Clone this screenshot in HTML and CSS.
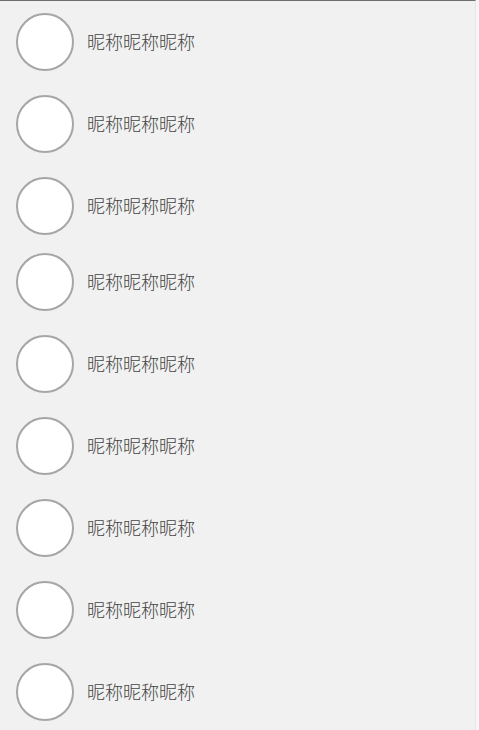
FILE: index.html
```html
<!DOCTYPE html>
<html lang="zh-CN">
<head>
<meta charset="utf-8">
<title>昵称列表</title>
<link rel="stylesheet" href="styles.css">
</head>
<body>
<div class="frame">
  <ul class="list">
    <li class="row"><span class="avatar"></span><span class="name">昵称昵称昵称</span></li>
    <li class="row"><span class="avatar"></span><span class="name">昵称昵称昵称</span></li>
    <li class="row"><span class="avatar"></span><span class="name">昵称昵称昵称</span></li>
    <li class="row row--tight"><span class="avatar"></span><span class="name">昵称昵称昵称</span></li>
    <li class="row"><span class="avatar"></span><span class="name">昵称昵称昵称</span></li>
    <li class="row"><span class="avatar"></span><span class="name">昵称昵称昵称</span></li>
    <li class="row"><span class="avatar"></span><span class="name">昵称昵称昵称</span></li>
    <li class="row"><span class="avatar"></span><span class="name">昵称昵称昵称</span></li>
    <li class="row"><span class="avatar"></span><span class="name">昵称昵称昵称</span></li>
  </ul>
</div>
</body>
</html>
```
FILE: styles.css
```css
html, body {
  margin: 0;
  padding: 0;
  height: 100%;
  background: #f6f6f6;
  overflow: hidden;
}
.frame {
  width: 476px;
  height: 100%;
  box-sizing: border-box;
  background: #f1f1f1;
  border-top: 1px solid #6e6e6e;
  border-right: 1px solid #e6e6e6;
}
.list {
  list-style: none;
  margin: 0;
  padding: 12px 0 0 16px;
  display: flex;
  flex-direction: column;
  gap: 24px;
}
.row {
  display: flex;
  align-items: center;
  height: 58px;
}
.row--tight {
  margin-top: -6px;
}
.avatar {
  width: 58px;
  height: 58px;
  box-sizing: border-box;
  border-radius: 50%;
  border: 2px solid #a6a6a6;
  background: #ffffff;
  flex: none;
}
.name {
  margin-left: 13px;
  font-family: "Noto Sans CJK SC", "Noto Sans", sans-serif;
  font-size: 18px;
  font-weight: 300;
  line-height: 18px;
  color: #444444;
  margin-top: -3px;
}
```
